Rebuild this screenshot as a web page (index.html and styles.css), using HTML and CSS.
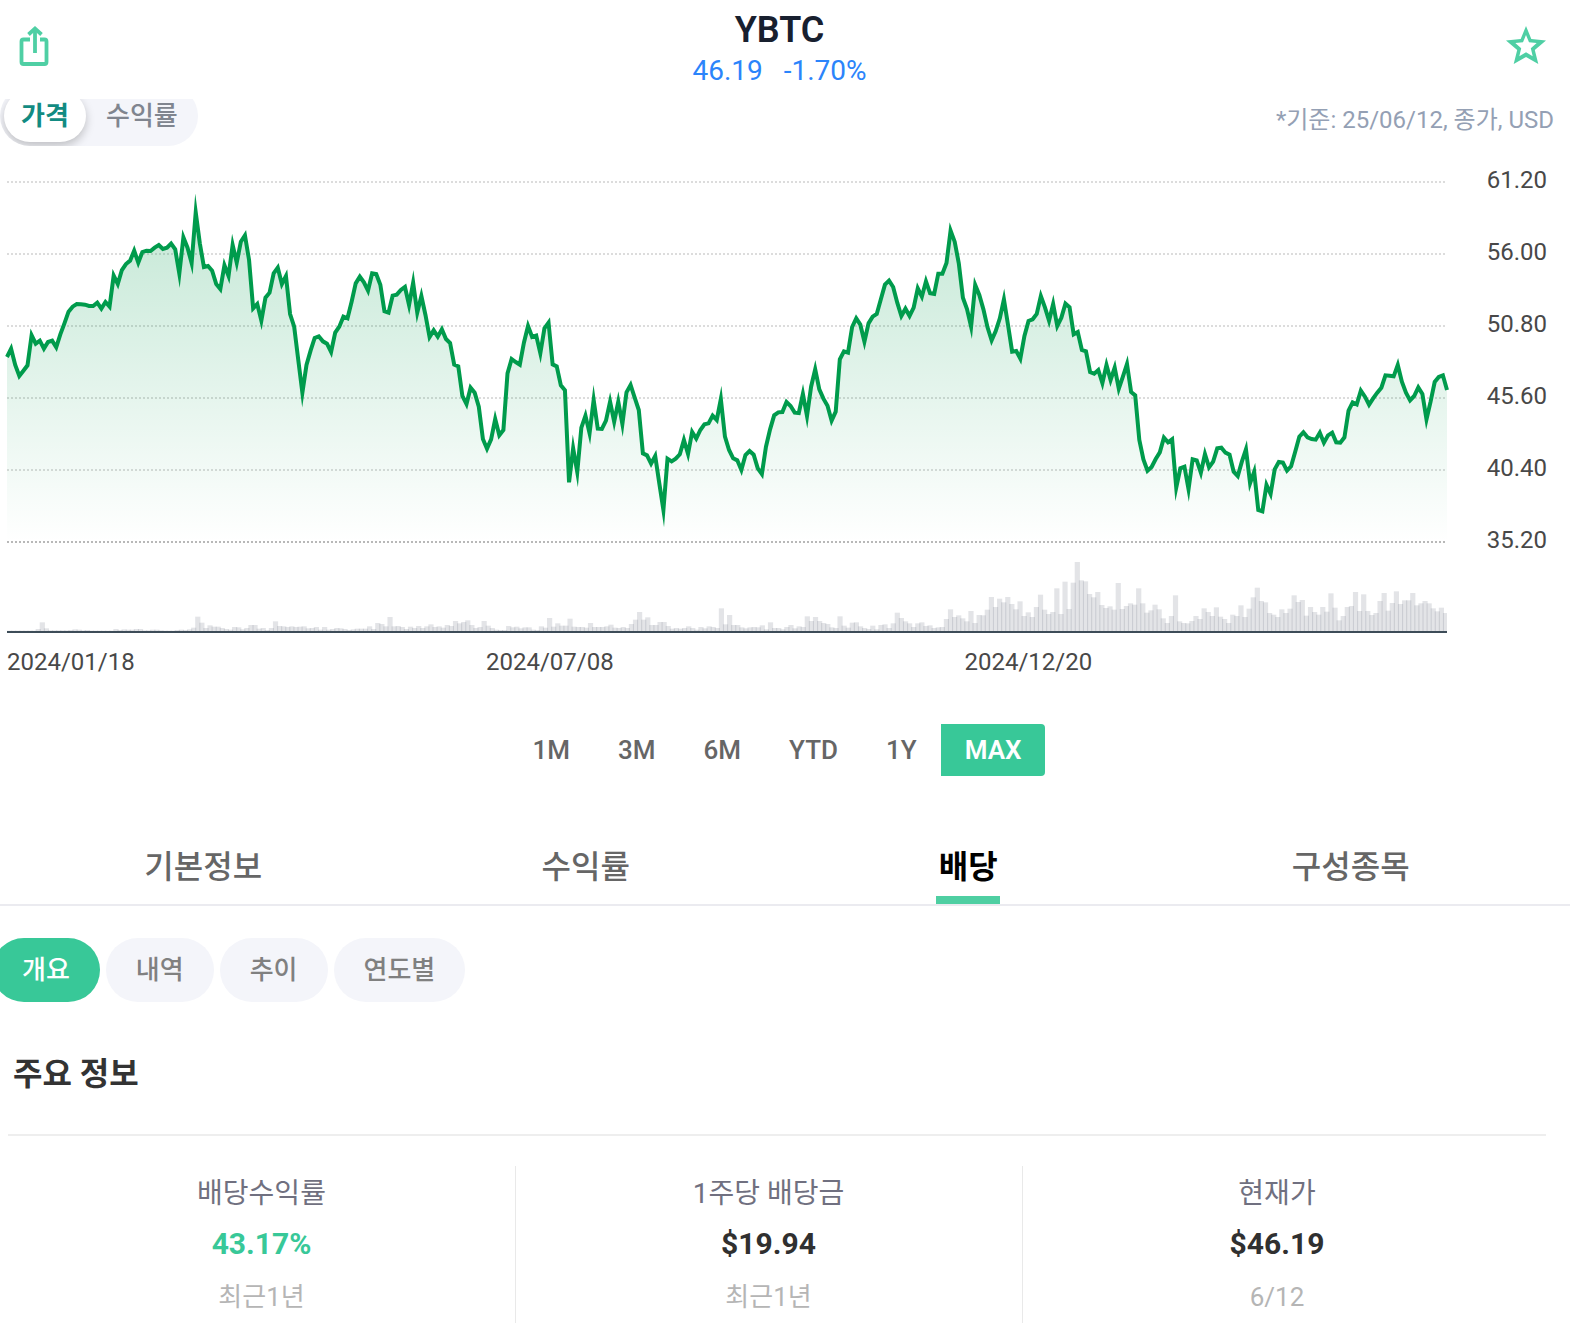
FILE: index.html
```html
<!DOCTYPE html>
<html lang="ko">
<head>
<meta charset="utf-8">
<title>YBTC</title>
<link rel="stylesheet" href="styles.css">
</head>
<body>
<div class="header">
	<svg class="icon share" width="40" height="48" viewBox="0 0 40 48">
		<path d="M15 17.500H8.500a2 2 0 0 0-2 2V40a2 2 0 0 0 2 2h21a2 2 0 0 0 2-2V19.500a2 2 0 0 0-2-2H25" />
		<path d="M20 31V8" />
		<path d="M13.500 12.500L20 6.500l6.500 6" />
	</svg>
	<div class="title">
		<h1>YBTC</h1>
		<p><span>46.19</span><span>-1.70%</span></p>
	</div>
	<svg class="icon star" width="44" height="44" viewBox="0 0 44 44">
		<path fill-rule="evenodd" d="M22 2L27.300 15L42 16.400L30.800 26L34.300 40L22 33L9.700 40L13.200 26L2 16.400L16.700 15ZM22 11L19 18.300L11.300 19L17.200 24.200L15.300 32.300L22 28.300L28.700 32.300L26.800 24.200L32.700 19L25 18.300Z" />
	</svg>
</div>

<div class="toolbar">
	<div class="toggle"><span class="on">가격</span><span>수익률</span></div>
	<p class="note">*기준: 25/06/12, 종가, USD</p>
</div>

<svg class="chart" id="chart" width="1570" height="544" viewBox="0 146 1570 544">
	<defs>
		<linearGradient id="fade" gradientUnits="userSpaceOnUse" x1="0" y1="196" x2="0" y2="542">
			<stop offset="0" stop-color="#009b4c" stop-opacity=".24" />
			<stop offset="1" stop-color="#009b4c" stop-opacity="0" />
		</linearGradient>
	</defs>
	<g id="grid"></g>
	<path id="area" />
	<path id="line" />
	<g id="volume"></g>
	<path class="axis" d="M7 632H1447" />
	<g class="dates">
		<text x="7" y="670">2024/01/18</text>
		<text x="486" y="670">2024/07/08</text>
		<text x="964.500" y="670">2024/12/20</text>
	</g>
</svg>

<div class="period">
	<span>1M</span><span>3M</span><span>6M</span><span>YTD</span><span>1Y</span><span class="on">MAX</span>
</div>

<div class="tabs">
	<div><span>기본정보</span></div>
	<div><span>수익률</span></div>
	<div><span class="on">배당</span></div>
	<div><span>구성종목</span></div>
</div>

<div class="chips">
	<span class="on">개요</span><span>내역</span><span>추이</span><span>연도별</span>
</div>

<h2>주요 정보</h2>
<div class="info">
	<div>
		<p class="label">배당수익률</p>
		<p class="value green">43.17%</p>
		<p class="sub">최근1년</p>
	</div>
	<div>
		<p class="label">1주당 배당금</p>
		<p class="value">$19.94</p>
		<p class="sub">최근1년</p>
	</div>
	<div>
		<p class="label">현재가</p>
		<p class="value">$46.19</p>
		<p class="sub">6/12</p>
	</div>
</div>
<script src="chart.js"></script>
</body>
</html>
```
FILE: styles.css
```css
*{ margin:0; padding:0; box-sizing:border-box;}
body{ width:1570px; height:1323px; overflow:hidden; background:#fff; font-family:Roboto,"Noto Sans CJK KR",sans-serif;}
.header{ height:99px; display:flex; justify-content:space-between; padding:0 22px 0 15px;}
.icon{ flex:none;}
.share{ margin-top:22px; fill:none; stroke:#4fcfa4; stroke-width:3.800;}
.star{ margin-top:24px; fill:#4fcfa4;}
.title{ text-align:center;}
.title h1{ height:50px; line-height:61px; font-size:36px; font-weight:600; color:#18202f;}
.title p{ display:flex; gap:21px; line-height:41px; font-size:28px; color:#2b84fb;}

.toolbar{ height:47px; overflow:hidden; display:flex; justify-content:space-between; padding-right:16px;}
.toggle{ display:flex; width:198px; height:60px; margin-top:-13px; padding:4px; border-radius:30px; background:#f4f5fa; overflow:hidden; font-size:26px; line-height:52px; font-weight:500; color:#80858f; white-space:nowrap;}
.toggle span{ padding:0 20px;}
.toggle .on{ flex:none; width:82px; padding:0; text-align:center; border-radius:26px; background:#fff; color:#128b82; font-weight:700; box-shadow:0 4px 10px rgba(0,0,0,.22);}
.note{ font-size:24px; line-height:43px; color:#94a0b4;}

.chart{ display:block; font-size:24px;}
.grid{ stroke:#dcdcdc; stroke-width:2; stroke-dasharray:2 2;}
.base{ stroke:#b8b8b8;}
.chart text{ fill:#484848;}
.price{ text-anchor:end;}
#area{ fill:url(#fade);}
#line{ fill:none; stroke:#009b4c; stroke-width:4; stroke-miterlimit:10;}
#volume{ fill:#50566a; fill-opacity:.16;}
.axis{ stroke:#3d4c58; stroke-width:2;}

.period{ display:flex; justify-content:center; margin-top:34px; padding-right:16px; height:52px; line-height:52px; font-size:26px; font-weight:500; color:#666;}
.period span{ padding:0 24px;}
.period .on{ background:#38c898; color:#fff; font-weight:600; border-radius:0 4px 4px 0;}

.tabs{ display:flex; height:82px; margin-top:48px; padding:0 28px 0 12px; border-bottom:2px solid #ebebf0; font-size:32px; font-weight:500; line-height:86px; color:#666;}
.tabs div{ flex:1; display:flex; justify-content:center;}
.tabs .on{ height:80px; width:64px; text-align:center; border-bottom:8px solid #4fcfa2; color:#000; font-weight:700;}

.chips{ display:flex; gap:6px; margin:32px 0 0 -8px; font-size:26px; font-weight:500; line-height:65px; color:#808080;}
.chips span{ height:64px; padding:0 30px; border-radius:32px; background:#f4f5fa;}
.chips .on{ background:#38c898; color:#fff;}

h2{ margin:46px 0 0 13px; height:86px; line-height:52px; font-size:32px; font-weight:700; color:#333;}
.info{ display:grid; grid-template-columns:507px 507px 510px; margin:0 24px 0 8px; padding-top:30px; border-top:2px solid #eee; text-align:center;}
.info div{ height:170px; box-shadow:1px 0 0 #e9e9e9;}
.info div:last-child{ box-shadow:none;}
.label{ height:52px; line-height:55px; font-size:28px; color:#707080;}
.value{ height:52px; line-height:52px; font-size:30px; font-weight:700; color:#303030;}
.green{ color:#38c898;}
.sub{ line-height:54px; font-size:26px; color:#b5b5b5;}
```
FILE: chart.js
```js
// values are in thirds of a pixel, measured down from TOP
var TOP = 180, LEFT = 7, WIDTH = 1440, BASE = 631;
var price = [
531,506,555,588,572,556,466,491,482,506,486,482,502,463,430,395,380,372,373,374,
378,378,368,386,366,380,287,312,270,252,242,212,248,216,212,213,203,195,207,203,
191,208,281,172,203,249,97,190,261,258,272,312,327,256,288,195,248,185,166,240,
385,372,422,353,338,280,263,312,288,402,440,540,638,555,512,474,469,484,491,516,
458,440,410,415,365,310,290,307,332,280,282,314,394,398,347,344,330,321,375,308,
398,348,405,471,451,470,448,477,489,554,559,648,672,623,638,680,777,806,778,717,
766,750,580,537,546,554,488,438,471,467,520,445,428,553,559,616,631,907,805,876,
743,707,760,660,746,747,722,665,725,665,732,637,615,653,690,820,826,851,828,910,
990,836,844,836,823,780,822,756,776,750,733,730,707,720,657,770,810,835,841,870,
825,813,824,865,882,800,748,706,697,696,666,678,698,699,642,708,620,568,628,656,
677,722,695,538,514,518,441,415,434,485,430,410,402,358,314,302,321,368,408,386,
408,383,325,350,304,340,342,281,281,249,152,185,250,353,387,440,315,345,388,442,
481,453,415,358,435,515,513,536,468,423,418,402,348,382,422,372,438,413,371,382,
463,456,510,514,576,581,570,609,555,600,563,626,590,552,636,646,780,838,872,861,
837,817,773,787,778,923,865,860,928,838,841,878,822,862,845,805,803,818,824,875,
888,845,808,910,875,990,994,915,942,868,846,848,872,859,815,770,757,772,777,779,
758,788,766,758,787,788,772,692,667,673,632,650,674,655,638,623,586,587,589,555,
605,638,661,648,622,642,718,665,606,591,586,630];
var volume = [
1,1,1,1,1,1,1,6,26,8,2,2,2,2,2,3,5,4,2,3,
1,1,1,1,1,1,6,3,5,4,4,6,6,2,2,4,4,2,1,1,
1,3,4,3,5,10,43,25,9,17,13,13,9,6,4,12,11,5,9,18,
18,7,9,3,9,29,15,14,12,14,12,13,14,8,9,12,4,12,4,6,
9,8,6,3,5,7,7,7,14,6,24,21,14,42,14,15,12,6,13,9,
15,9,14,20,12,14,10,18,15,30,23,27,32,18,9,12,30,16,9,4,
3,3,15,11,13,8,11,11,4,3,14,10,39,13,23,16,16,37,13,12,
12,10,24,12,12,12,14,19,10,9,12,9,21,34,57,34,41,18,18,27,
27,15,7,9,7,9,14,9,4,12,8,14,12,9,68,20,48,18,18,11,
8,11,12,11,17,5,26,9,9,5,12,18,8,14,12,44,30,42,30,24,
21,11,9,44,16,10,25,26,14,9,6,16,5,18,20,9,23,55,39,29,
23,12,23,26,15,17,9,11,12,36,65,42,47,38,29,60,24,48,47,64,
102,72,97,86,102,81,65,89,45,56,42,72,109,64,51,57,128,51,148,66,
145,207,152,149,111,101,117,78,69,74,64,144,66,75,83,79,128,83,55,62,
79,65,38,24,45,107,29,24,23,30,45,36,68,57,45,71,43,36,24,49,
45,77,42,67,101,130,90,86,54,49,42,65,54,67,107,87,93,46,72,57,
49,72,58,113,70,32,45,72,75,117,60,110,60,48,54,90,114,61,84,119,
81,92,92,114,77,83,90,83,68,59,70,54];
var labels = ['61.20','56.00','50.80','45.60','40.40','35.20'];

var grid = '';
for(var i=0; i<labels.length; i++)
{
	var gy = 182 + i*72;
	grid += '<path class="grid' + (i==5 ? ' base' : '') + '" d="M7 ' + gy + 'H1445"/>';
	grid += '<text class="price" x="1547" y="' + (gy+6) + '">' + labels[i] + '</text>';
}
document.getElementById('grid').innerHTML = grid;

var pts = [];
for(var i=0; i<price.length; i++)
{
	pts.push((LEFT + i*WIDTH/(price.length-1)).toFixed(2) + ' ' + (TOP + price[i]/3).toFixed(2));
}
var d = 'M' + pts.join('L');
document.getElementById('line').setAttribute('d', d);
document.getElementById('area').setAttribute('d', d + 'V542H' + LEFT + 'Z');

// bars are a little wider than the step, so neighbours overlap and shade each other
var bars = '';
var step = WIDTH/volume.length;
for(var i=0; i<volume.length; i++)
{
	var w = i==volume.length-1 ? step : 5.2;
	bars += '<rect x="' + (LEFT + i*step).toFixed(2) + '" y="' + (BASE - volume[i]/3).toFixed(2) + '" width="' + w + '" height="' + (volume[i]/3).toFixed(2) + '"/>';
}
document.getElementById('volume').innerHTML = bars;
```
